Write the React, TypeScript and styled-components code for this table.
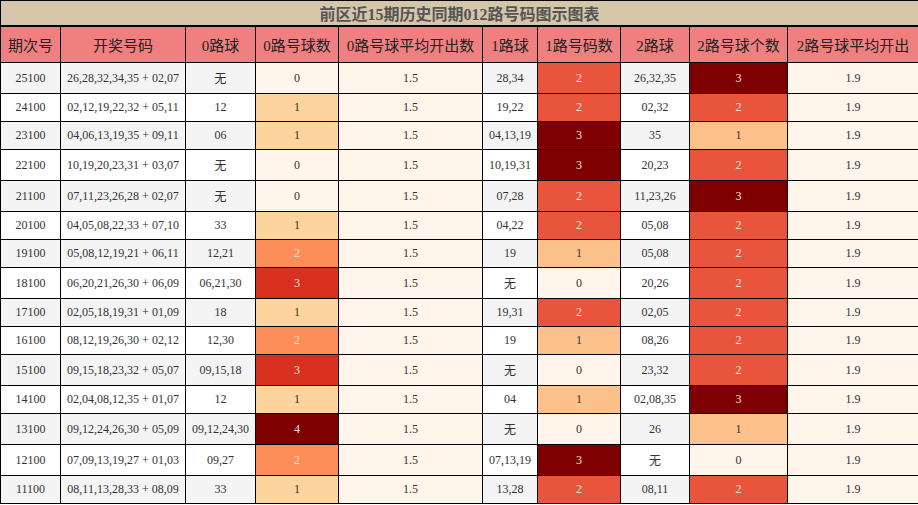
import React from "react";
import styled, { createGlobalStyle } from "styled-components";

const Global = createGlobalStyle`
  html, body { margin: 0; padding: 0; background: #fff; }
  body { font-family: "Liberation Serif", "Noto Sans CJK SC", serif; }
`;

const Table = styled.table`
  width: 918px;
  border-collapse: collapse;
  table-layout: fixed;
  border: 1px solid #000;
  font-family: "Liberation Serif", "Noto Sans CJK SC", serif;
`;

const TitleCell = styled.th`
  background: #d5c6aa;
  color: #555;
  font-size: 16px;
  font-weight: bold;
  text-align: center;
  padding: 0;
  border: 1px solid #000;
  border-bottom-width: 2px;
`;

const HeadCell = styled.th`
  background: #f08080;
  color: #222;
  font-size: 15px;
  font-weight: normal;
  text-align: center;
  padding: 7px 0;
  border: 1px solid #000;
  white-space: nowrap;
  overflow: hidden;
`;

const Cell = styled.td<{ $bg: string; $fg: string }>`
  background: ${(p) => p.$bg};
  color: ${(p) => p.$fg};
  font-size: 12px;
  text-align: center;
  padding: 6px 2px;
  border: 1px solid #000;
  white-space: nowrap;
`;

const widths = [60, 125, 70, 83, 144, 55, 83, 69, 98, 131];
const headers = [
  "期次号",
  "开奖号码",
  "0路球",
  "0路号球数",
  "0路号球平均开出数",
  "1路球",
  "1路号码数",
  "2路球",
  "2路号球个数",
  "2路号球平均开出",
];

type Row = [string, string, string, number, string, number, string, number];

const rows: Row[] = [
  ["25100", "26,28,32,34,35 + 02,07", "无", 0, "28,34", 2, "26,32,35", 3],
  ["24100", "02,12,19,22,32 + 05,11", "12", 1, "19,22", 2, "02,32", 2],
  ["23100", "04,06,13,19,35 + 09,11", "06", 1, "04,13,19", 3, "35", 1],
  ["22100", "10,19,20,23,31 + 03,07", "无", 0, "10,19,31", 3, "20,23", 2],
  ["21100", "07,11,23,26,28 + 02,07", "无", 0, "07,28", 2, "11,23,26", 3],
  ["20100", "04,05,08,22,33 + 07,10", "33", 1, "04,22", 2, "05,08", 2],
  ["19100", "05,08,12,19,21 + 06,11", "12,21", 2, "19", 1, "05,08", 2],
  ["18100", "06,20,21,26,30 + 06,09", "06,21,30", 3, "无", 0, "20,26", 2],
  ["17100", "02,05,18,19,31 + 01,09", "18", 1, "19,31", 2, "02,05", 2],
  ["16100", "08,12,19,26,30 + 02,12", "12,30", 2, "19", 1, "08,26", 2],
  ["15100", "09,15,18,23,32 + 05,07", "09,15,18", 3, "无", 0, "23,32", 2],
  ["14100", "02,04,08,12,35 + 01,07", "12", 1, "04", 1, "02,08,35", 3],
  ["13100", "09,12,24,26,30 + 05,09", "09,12,24,30", 4, "无", 0, "26", 1],
  ["12100", "07,09,13,19,27 + 01,03", "09,27", 2, "07,13,19", 3, "无", 0],
  ["11100", "08,11,13,28,33 + 08,09", "33", 1, "13,28", 2, "08,11", 2],
];

const CREAM = "#fff5eb";
const scale4 = ["#fff5eb", "#fdd49e", "#fc8d59", "#d7301f", "#7f0000"];
const scale3 = ["#fff5eb", "#fdc18b", "#e8543c", "#7f0000"];
const DARK = "#333";
const LIGHT = "#fbe3dc";

function heat(v: number, scale: string[]) {
  return { bg: scale[v], fg: v >= 2 ? LIGHT : DARK };
}

export default function App() {
  return (
    <>
      <Global />
      <Table>
        <colgroup>
          {widths.map((w, i) => (
            <col key={i} style={{ width: w }} />
          ))}
        </colgroup>
        <thead>
          <tr>
            <TitleCell colSpan={10}>前区近15期历史同期012路号码图示图表</TitleCell>
          </tr>
          <tr>
            {headers.map((h) => (
              <HeadCell key={h}>{h}</HeadCell>
            ))}
          </tr>
        </thead>
        <tbody>
          {rows.map((r, i) => {
            const base = i % 2 === 0 ? "#f4f4f4" : "#ffffff";
            const h0 = heat(r[3], scale4);
            const h1 = heat(r[5], scale3);
            const h2 = heat(r[7], scale3);
            return (
              <tr key={r[0]}>
                <Cell $bg={base} $fg={DARK}>{r[0]}</Cell>
                <Cell $bg={base} $fg={DARK}>{r[1]}</Cell>
                <Cell $bg={base} $fg={DARK}>{r[2]}</Cell>
                <Cell $bg={h0.bg} $fg={h0.fg}>{r[3]}</Cell>
                <Cell $bg={CREAM} $fg={DARK}>1.5</Cell>
                <Cell $bg={base} $fg={DARK}>{r[4]}</Cell>
                <Cell $bg={h1.bg} $fg={h1.fg}>{r[5]}</Cell>
                <Cell $bg={base} $fg={DARK}>{r[6]}</Cell>
                <Cell $bg={h2.bg} $fg={h2.fg}>{r[7]}</Cell>
                <Cell $bg={CREAM} $fg={DARK}>1.9</Cell>
              </tr>
            );
          })}
        </tbody>
      </Table>
    </>
  );
}
